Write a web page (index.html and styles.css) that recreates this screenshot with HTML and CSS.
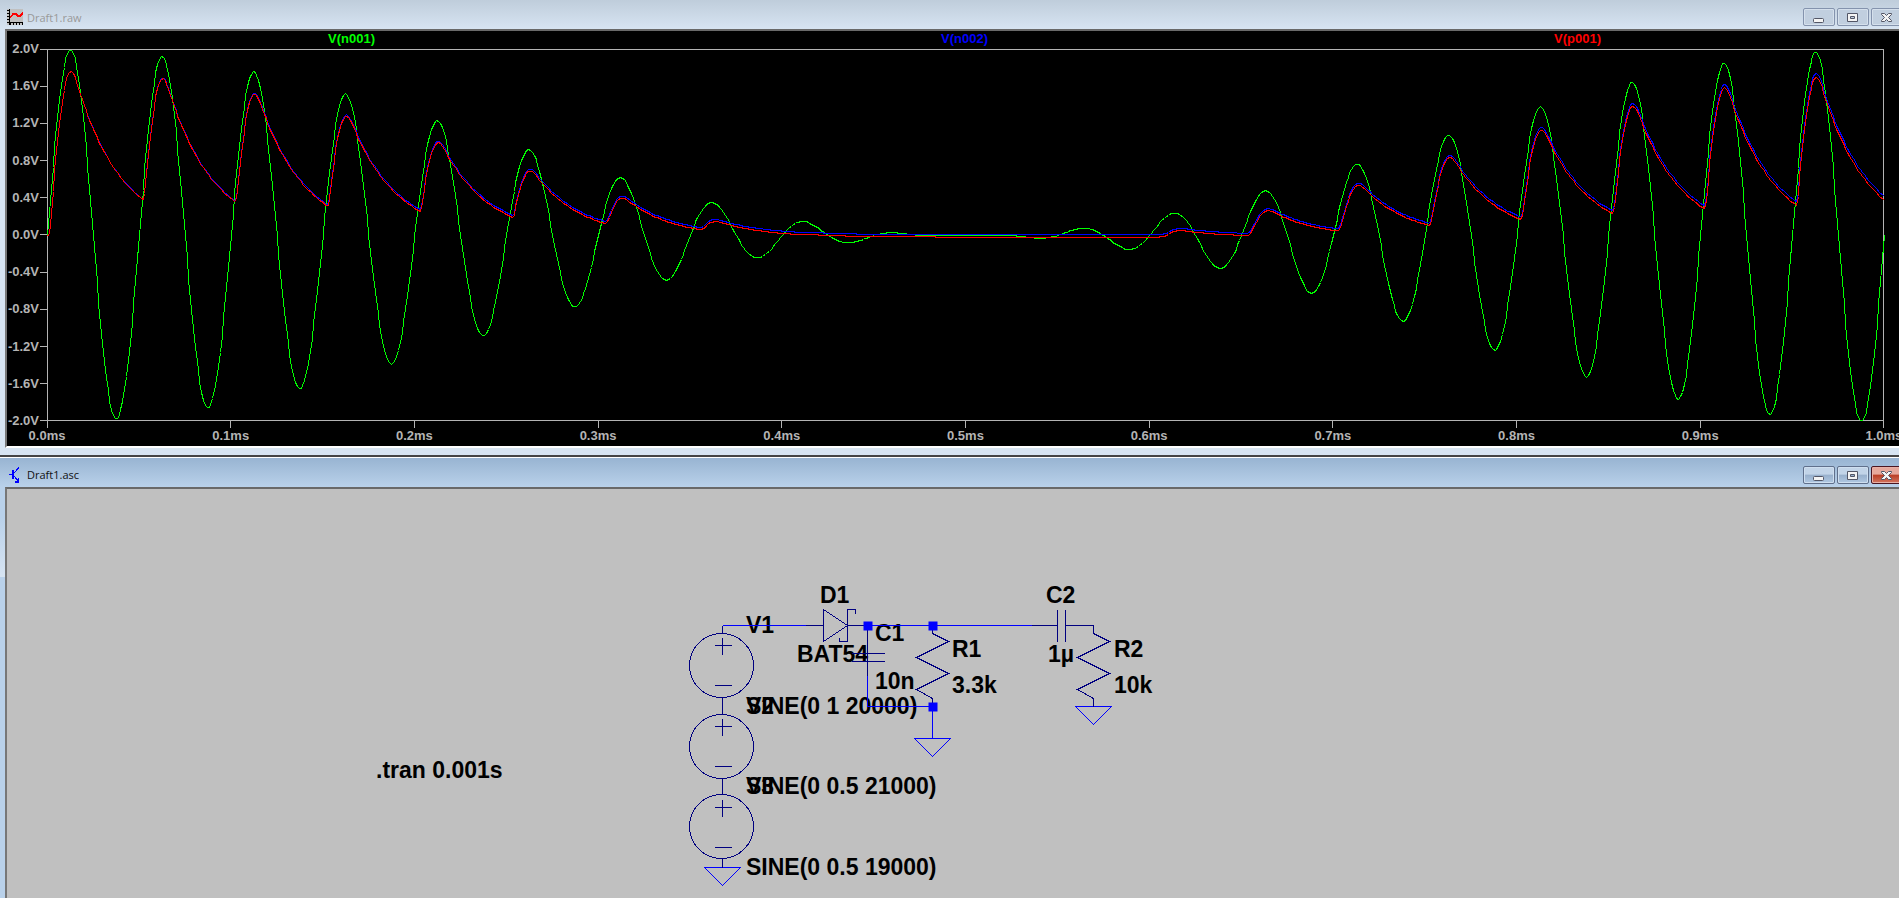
FILE: index.html
```html
<!DOCTYPE html>
<html lang="en">

<head>
    <meta charset="UTF-8">
    <meta name="viewport" content="width=device-width, initial-scale=1.0">
    <title>Draft1</title>
    <link rel="stylesheet" href="styles.css">
</head>

<body>
    <!-- Waveform window -->
    <section class="window plot-window">
        <header class="titlebar">
            <svg class="title-icon" width="16" height="16" viewBox="0 0 16 16" shape-rendering="crispEdges">
                <rect width="16" height="16" fill="#c0c0c0" />
                <path d="M2.5 0V16M2 13.5H16M0 1.5H2M0 4.5H2M0 7.5H2M0 10.5H2M0 13.5H2M3.5 14V16M6.5 14V16M9.5 14V16M12.5 14V16M15.5 14V16" stroke="#000" fill="none" />
                <path d="M3 8.5L4 7.5L6 5H9L11 7H13L16 4" stroke="#f00" fill="none" stroke-width="1.5" />
            </svg>
            <h2 class="title">Draft1.raw</h2>
            <div class="window-buttons">
                <button class="window-button" aria-label="Minimize">
                    <svg width="12" height="12" viewBox="0 0 12 12"><rect x="0.5" y="7.5" width="10" height="4" rx="1" fill="#f4f4f4" stroke="#535666" /></svg>
                </button>
                <button class="window-button" aria-label="Maximize">
                    <svg width="12" height="12" viewBox="0 0 12 12"><path d="M0.5 2.5H10.5V10.5H0.5ZM3.5 5.5V7.5H7.5V5.5Z" fill="#f4f4f4" fill-rule="evenodd" stroke="#535666" /></svg>
                </button>
                <button class="window-button" aria-label="Close">
                    <svg width="12" height="12" viewBox="0 0 12 12"><path d="M0.5 2.5H3.5L5.5 4.5L7.5 2.5H10.5V3.5L7.5 6.5L10.5 9.5V10.5H7.5L5.5 8.5L3.5 10.5H0.5V9.5L3.5 6.5L0.5 3.5Z" fill="#f4f4f4" stroke="#535666" /></svg>
                </button>
            </div>
        </header>
        <div class="pane plot">
            <div class="legend">
                <span class="trace-1">V(n001)</span>
                <span class="trace-2">V(n002)</span>
                <span class="trace-3">V(p001)</span>
            </div>
            <div class="plot-row">
                <div class="y-axis" id="yAxis"></div>
                <div class="plot-area" id="plotArea">
                    <svg class="waves">
                        <polyline id="wave1" class="wave wave-1" />
                        <polyline id="wave2" class="wave wave-2" />
                        <polyline id="wave3" class="wave wave-3" />
                    </svg>
                </div>
            </div>
            <div class="x-axis" id="xAxis"></div>
        </div>
    </section>

    <!-- Schematic window -->
    <section class="window schematic-window">
        <header class="titlebar">
            <svg class="title-icon" width="16" height="16" viewBox="0 0 16 16" shape-rendering="crispEdges">
                <path d="M2 7.5H6M7 6L12 0.5M7 9L12 15" stroke="#00f" fill="none" />
                <path d="M5 3H7V12H5ZM12 11V16H8V14H10V12Z" fill="#00f" />
            </svg>
            <h2 class="title">Draft1.asc</h2>
            <div class="window-buttons">
                <button class="window-button" aria-label="Minimize">
                    <svg width="12" height="12" viewBox="0 0 12 12"><rect x="0.5" y="7.5" width="10" height="4" rx="1" fill="#f4f4f4" stroke="#535666" /></svg>
                </button>
                <button class="window-button" aria-label="Maximize">
                    <svg width="12" height="12" viewBox="0 0 12 12"><path d="M0.5 2.5H10.5V10.5H0.5ZM3.5 5.5V7.5H7.5V5.5Z" fill="#f4f4f4" fill-rule="evenodd" stroke="#535666" /></svg>
                </button>
                <button class="window-button close" aria-label="Close">
                    <svg width="12" height="12" viewBox="0 0 12 12"><path d="M0.5 2.5H3.5L5.5 4.5L7.5 2.5H10.5V3.5L7.5 6.5L10.5 9.5V10.5H7.5L5.5 8.5L3.5 10.5H0.5V9.5L3.5 6.5L0.5 3.5Z" fill="#f4f4f4" stroke="#535666" /></svg>
                </button>
            </div>
        </header>
        <div class="pane sheet">
            <svg class="schematic" width="1200" height="420" viewBox="0 0 1200 420">
                <!-- Labels -->
                <g class="labels">
                    <text x="369" y="289">.tran 0.001s</text>
                    <text x="739" y="144">V1</text>
                    <text x="739" y="225">V2</text>
                    <text x="739" y="305">V3</text>
                    <text x="739" y="225">SINE(0 1 20000)</text>
                    <text x="739" y="305">SINE(0 0.5 21000)</text>
                    <text x="739" y="386">SINE(0 0.5 19000)</text>
                    <text x="813" y="114">D1</text>
                    <text x="790" y="173">BAT54</text>
                    <text x="868" y="152">C1</text>
                    <text x="868" y="200">10n</text>
                    <text x="945" y="168">R1</text>
                    <text x="945" y="204">3.3k</text>
                    <text x="1039" y="114">C2</text>
                    <text x="1041" y="173">1µ</text>
                    <text x="1107" y="168">R2</text>
                    <text x="1107" y="204">10k</text>
                </g>

                <g transform="translate(-6.5 -488.5)">
                    <!-- Wires, grounds -->
                    <path class="wire" d="M722 625H805M867 625H1031M867 706H932M932 706V738M867 675V706M914 738H950L932 756ZM1075 706H1111L1093 724ZM704 867H740L722 885Z" />

                    <!-- Voltage sources -->
                    <g class="part">
                        <circle cx="721" cy="665" r="32" />
                        <circle cx="721" cy="746" r="32" />
                        <circle cx="721" cy="826" r="32" />
                        <path d="M722 625V633M722 697V714M722 778V794M722 858V867" />
                        <path d="M714 645H731M722 637V654M714 685H731" />
                        <path d="M714 726H731M722 718V735M714 766H731" />
                        <path d="M714 807H731M722 799V816M714 847H731" />
                    </g>

                    <!-- Diode, capacitors, resistors -->
                    <g class="part">
                        <path d="M805 625H823M823 609V641L847 625ZM855 613V609H847V641H839V637M847 625H867" />
                        <path d="M867 625V675M851 653H884M851 661H884" />
                        <path d="M932 625V633L948 641L916 657L948 673L916 689L932 698V706" />
                        <path d="M1031 625H1057M1057 609V641M1065 609V641M1065 625H1093V633L1109 641L1077 657L1109 673L1077 689L1093 698V706" />
                    </g>

                    <!-- Junctions -->
                    <path class="junction" d="M863 621h9v9h-9zM928 621h9v9h-9zM928 702h9v9h-9z" />
                </g>
            </svg>
        </div>
    </section>

    <script src="script.js"></script>
</body>

</html>
```

FILE: styles.css
```css
body {
    margin: 0;
    height: 100vh;
    overflow: hidden;
    display: flex;
    flex-direction: column;
    font-family: "Liberation Sans", Arial, sans-serif;
    background: #d7e4f2;
}

/* Windows */
.window {
    display: flex;
    flex-direction: column;
    box-sizing: border-box;
    margin-right: -10px;
    padding-left: 5px;
}

.plot-window {
    height: 455px;
    flex: none;
    padding-bottom: 7px;
    background: linear-gradient(#bfcddb, #d7e4f2 29px);
}

.schematic-window {
    flex: 1;
    min-height: 0;
    border-top: 2px solid #444;
    box-shadow: inset 0 1px #fff;
    background: linear-gradient(#97b3d1, #b9d1ea 30px, #b9d1ea 60px, #d7e4f2 120px, #b9d1ea 120px);
}

.titlebar {
    display: flex;
    align-items: center;
    height: 29px;
    flex: none;
    box-sizing: border-box;
    padding: 5px 6px 0 2px;
}

.schematic-window .titlebar {
    height: 30px;
}

.title {
    flex: 1;
    margin: 0 0 0 4px;
    font: 11px "Open Sans", "Noto Sans", sans-serif;
    color: #111;
}

.plot-window .title {
    color: #999;
}

.window-buttons {
    display: flex;
    gap: 2px;
}

.window-button {
    display: flex;
    align-items: center;
    justify-content: center;
    box-sizing: border-box;
    width: 32px;
    height: 18px;
    padding: 0;
    border: 1px solid #8493ad;
    border-radius: 2px;
    background: #c1cfdf;
    box-shadow: inset 0 0 0 1px #d5e0ec;
}

.schematic-window .window-button {
    border-color: #60708c;
    background: linear-gradient(#c2d4e8 45%, #98b0cc 50%, #b0c8e2);
    box-shadow: inset 0 0 0 1px #cfdff0;
}

.schematic-window .window-button.close {
    border-color: #4a1520;
    background: linear-gradient(#e6a89c 45%, #b93d25 50%, #d27660);
    box-shadow: inset 0 0 0 1px #e8b0a6;
}

.pane {
    flex: 1;
    min-height: 0;
    border: 2px solid #777;
    border-top-color: #696969;
    border-bottom-color: #fff;
    overflow: hidden;
}

/* Plot */
.plot {
    display: flex;
    flex-direction: column;
    padding-right: 23px;
    background: #000;
    color: #b4b4b4;
    font-size: 13px;
    font-weight: bold;
    line-height: 16px;
}

.legend {
    display: flex;
    justify-content: space-around;
    height: 18px;
    margin-left: 38px;
}

.trace-1 {
    color: #00ff00;
}

.trace-2 {
    color: #0000ff;
}

.trace-3 {
    color: #ff0000;
}

.plot-row {
    display: flex;
    flex: 1;
    min-height: 0;
}

.y-axis {
    display: flex;
    flex-direction: column;
    justify-content: space-between;
    width: 40px;
    margin: -8px 0;
}

.y-tick {
    display: flex;
    justify-content: flex-end;
    align-items: center;
    height: 16px;
}

.y-tick::after {
    content: "";
    width: 7px;
    height: 1px;
    margin-left: 1px;
    background: #b4b4b4;
}

.plot-area {
    flex: 1;
    min-width: 0;
    border: 1px solid #b4b4b4;
}

.waves {
    display: block;
    width: 100%;
    height: 100%;
    overflow: visible;
}

.wave {
    fill: none;
    stroke-width: 1;
    shape-rendering: crispEdges;
}

.wave-1 {
    stroke: #00ff00;
}

.wave-2 {
    stroke: #0000ff;
}

.wave-3 {
    stroke: #ff0000;
}

.x-axis {
    display: flex;
    justify-content: space-between;
    height: 25px;
    margin: 0 -30px 0 10px;
}

.x-tick {
    display: flex;
    flex-direction: column;
    align-items: center;
    width: 60px;
}

.x-tick::before {
    content: "";
    width: 1px;
    height: 7px;
    background: #b4b4b4;
}

/* Schematic */
.sheet {
    border-bottom: 0;
    background: #c0c0c0;
}

.schematic {
    display: block;
    overflow: visible;
}

.labels {
    font-size: 23px;
    font-weight: bold;
}

.wire,
.part {
    fill: none;
    stroke: #0000ff;
    shape-rendering: crispEdges;
}

.part {
    stroke: #000080;
}

.junction {
    fill: #0000ff;
}
```

FILE: script.js
```javascript
const yAxis = document.getElementById("yAxis");
const xAxis = document.getElementById("xAxis");
const plotArea = document.getElementById("plotArea");

for (let i = 5; i >= -5; i--) {
    const tick = document.createElement("div");
    tick.className = "y-tick";
    tick.textContent = (i * 0.4).toFixed(1) + "V";
    yAxis.appendChild(tick);
}

for (let i = 0; i <= 10; i++) {
    const tick = document.createElement("div");
    tick.className = "x-tick";
    tick.textContent = (i / 10).toFixed(1) + "ms";
    xAxis.appendChild(tick);
}

// Sum of the three series sources
function source(t) {
    const w = 2 * Math.PI * t;
    return Math.sin(20000 * w) + 0.5 * Math.sin(21000 * w) + 0.5 * Math.sin(19000 * w);
}

// Peak detector: schottky diode into C1 || R1, coupled to R2 through C2
function simulate() {
    const R1 = 3300, R2 = 10000, C1 = 10e-9, C2 = 1e-6;
    const IS = 1e-7, VT = 0.026;
    const dt = 1e-9;
    const steps = 1e6;
    const traces = [[], [], []];
    let v1 = 0, vc2 = 0;

    for (let i = 0; i <= steps; i++) {
        const vin = source(i * dt);
        if (i % 1000 === 0) {
            traces[0].push(vin);
            traces[1].push(v1);
            traces[2].push(v1 - vc2);
        }
        const id = IS * (Math.exp((vin - v1) / VT) - 1);
        const i2 = (v1 - vc2) / R2;
        v1 += (id - v1 / R1 - i2) / C1 * dt;
        vc2 += i2 / C2 * dt;
    }
    return traces;
}

const traces = simulate();

// Points are snapped to whole pixels so the traces stay sharp
function draw() {
    const width = plotArea.offsetWidth;
    const height = plotArea.offsetHeight;

    traces.forEach((trace, n) => {
        const points = trace.map((v, i) => {
            const x = Math.round(i / 1000 * width) - 0.5;
            const y = Math.round((2 - v) / 4 * height) - 0.5;
            return x + "," + y;
        });
        document.getElementById("wave" + (n + 1)).setAttribute("points", points.join(" "));
    });
}

draw();
window.addEventListener("resize", draw);
```
